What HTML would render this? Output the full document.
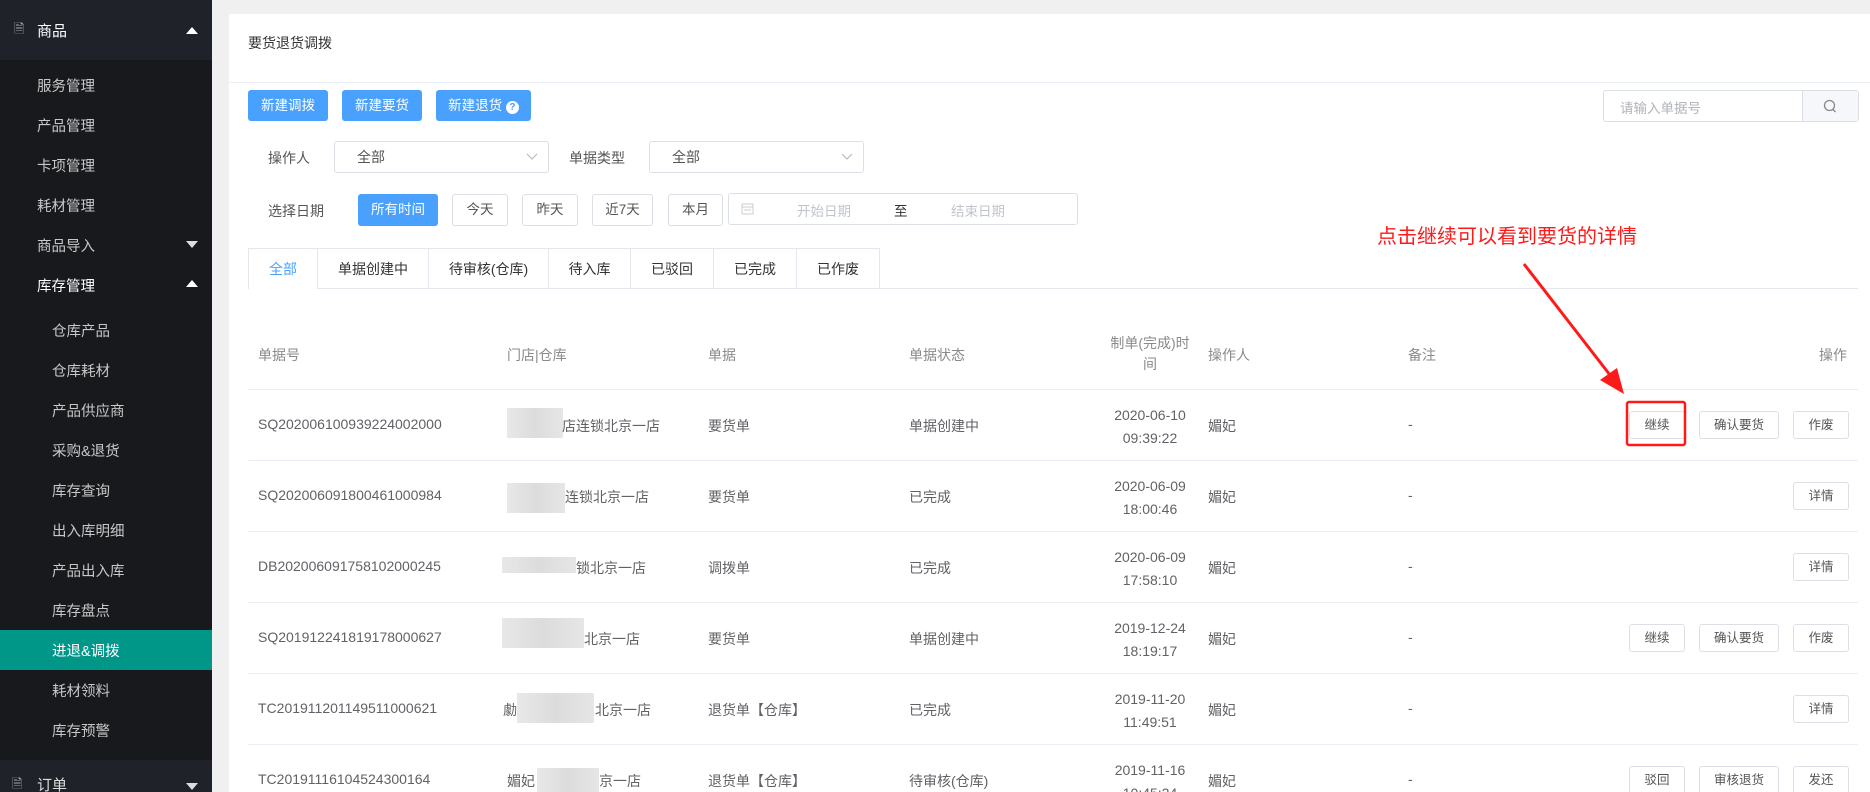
<!DOCTYPE html>
<html><head><meta charset="utf-8">
<style>
*{margin:0;padding:0;box-sizing:border-box}
html{width:1870px;height:792px;overflow:hidden}
body{width:1870px;height:792px;overflow:hidden;background:#f0f0f0;font-family:"Liberation Sans","Noto Sans CJK SC",sans-serif;font-size:14px;color:#606266;position:relative}
.a{position:absolute;white-space:nowrap}
#sb{position:absolute;left:0;top:0;width:212px;height:792px;background:#18191d}
.sh{position:absolute;left:0;width:212px;height:60px;background:#20222a;color:#fff;font-size:15px}
.si{position:absolute;left:37px;color:#c8c8c8;font-size:14.5px}
.si2{left:52px}
.tri{position:absolute;right:14px;width:0;height:0;border-left:6px solid transparent;border-right:6px solid transparent}
.up{border-bottom:7px solid #fff}
.dn{border-top:7px solid #ddd}
#card{position:absolute;left:229px;top:14px;width:1641px;height:778px;background:#fff}
.btn{position:absolute;height:31px;line-height:31px;text-align:center;background:#49a1fd;color:#fff;border-radius:3px;font-size:13.5px}
.ob{position:absolute;height:32px;line-height:30px;text-align:center;border:1px solid #dcdfe6;border-radius:3px;color:#555;font-size:13.5px;background:#fff}
.sel{position:absolute;height:32px;border:1px solid #dcdfe6;border-radius:3px;background:#fff;color:#555;line-height:30px;padding-left:22px}
.tab{position:absolute;top:248px;height:40px;line-height:40px;text-align:center;border:1px solid #e4e7ed;border-bottom:none;color:#333;font-size:14px;border-left:none}
.hd{position:absolute;color:#8a8a8a;font-size:14px}
.cell{position:absolute;color:#606266;font-size:14px}
.line{position:absolute;left:248px;width:1610px;height:1px;background:#ebeef5}
.rb{position:absolute;height:28px;line-height:26px;text-align:center;border:1px solid #dcdfe6;border-radius:3px;font-size:12.5px;color:#555;background:#fff}
.blur{position:absolute;background:linear-gradient(90deg,#e8e8e8,#dcdcdc,#e6e6e6)}
</style></head><body>
<div id="sb">
 <div class="sh" style="top:0"><span class="a" style="left:14px;top:20px;color:#aaa;font-size:13px">🗎</span><span class="a" style="left:37px;top:20px">商品</span><div class="tri up" style="top:27px"></div></div>
 <div class="si" style="top:75px">服务管理</div>
 <div class="si" style="top:115px">产品管理</div>
 <div class="si" style="top:155px">卡项管理</div>
 <div class="si" style="top:195px">耗材管理</div>
 <div class="si" style="top:235px">商品导入</div><div class="tri dn" style="top:241px"></div>
 <div class="si" style="top:275px;color:#fff">库存管理</div><div class="tri up" style="top:280px"></div>
 <div class="si si2" style="top:320px">仓库产品</div>
 <div class="si si2" style="top:360px">仓库耗材</div>
 <div class="si si2" style="top:400px">产品供应商</div>
 <div class="si si2" style="top:440px">采购&amp;退货</div>
 <div class="si si2" style="top:480px">库存查询</div>
 <div class="si si2" style="top:520px">出入库明细</div>
 <div class="si si2" style="top:560px">产品出入库</div>
 <div class="si si2" style="top:600px">库存盘点</div>
 <div style="position:absolute;left:0;top:630px;width:212px;height:40px;background:#009688"></div>
 <div class="si si2" style="top:640px;color:#fff">进退&amp;调拨</div>
 <div class="si si2" style="top:680px">耗材领料</div>
 <div class="si si2" style="top:720px">库存预警</div>
 <div class="sh" style="top:760px"><span class="a" style="left:12px;top:15px;color:#aaa;font-size:13px">🗎</span><span class="a" style="left:37px;top:14px;color:#ddd">订单</span><div class="tri dn" style="top:23px"></div></div>
</div>

<div id="card"></div>
<div class="a" style="left:248px;top:33px;color:#333;font-size:14px">要货退货调拨</div>
<div style="position:absolute;left:229px;top:82px;width:1641px;height:1px;background:#ebeef5"></div>

<div class="btn" style="left:248px;top:90px;width:80px">新建调拨</div>
<div class="btn" style="left:342px;top:90px;width:80px">新建要货</div>
<div class="btn" style="left:436px;top:90px;width:95px">新建退货 <span style="display:inline-block;width:13px;height:13px;border-radius:50%;background:#fff;color:#49a1fd;font-size:10px;line-height:13px;font-weight:bold;vertical-align:0">?</span></div>

<div style="position:absolute;left:1603px;top:90px;width:256px;height:32px;border:1px solid #dcdfe6;border-radius:3px;background:#fff"></div>
<div style="position:absolute;left:1802px;top:91px;width:56px;height:30px;background:#f5f7fa;border-left:1px solid #dcdfe6"></div>
<div class="a" style="left:1620px;top:97px;color:#b0b3b8;font-size:13.5px">请输入单据号</div>
<svg class="a" style="left:1823px;top:99px" width="14" height="15" viewBox="0 0 14 15"><circle cx="6.5" cy="6.5" r="5" fill="none" stroke="#888" stroke-width="1.3"/><line x1="10" y1="10.5" x2="12.5" y2="13" stroke="#888" stroke-width="1.3"/></svg>

<div class="a" style="left:268px;top:148px;color:#555">操作人</div>
<div class="sel" style="left:334px;top:141px;width:215px">全部</div>
<svg class="a" style="left:526px;top:152px" width="12" height="10"><polyline points="1,2 6,7 11,2" fill="none" stroke="#bbb" stroke-width="1.2"/></svg>
<div class="a" style="left:569px;top:148px;color:#555">单据类型</div>
<div class="sel" style="left:649px;top:141px;width:215px">全部</div>
<svg class="a" style="left:841px;top:152px" width="12" height="10"><polyline points="1,2 6,7 11,2" fill="none" stroke="#bbb" stroke-width="1.2"/></svg>

<div class="a" style="left:268px;top:201px;color:#555">选择日期</div>
<div class="btn" style="left:358px;top:194px;width:80px;height:32px;line-height:32px">所有时间</div>
<div class="ob" style="left:452px;top:194px;width:56px">今天</div>
<div class="ob" style="left:522px;top:194px;width:56px">昨天</div>
<div class="ob" style="left:592px;top:194px;width:61px">近7天</div>
<div class="ob" style="left:668px;top:194px;width:55px">本月</div>
<div class="ob" style="left:728px;top:193px;width:350px;height:32px"></div>
<svg class="a" style="left:741px;top:202px" width="13" height="13"><rect x="1" y="2" width="11" height="10" fill="none" stroke="#ccc"/><line x1="1" y1="5" x2="12" y2="5" stroke="#ccc"/><line x1="3" y1="8" x2="10" y2="8" stroke="#ccc"/></svg>
<div class="a" style="left:797px;top:200px;color:#c0c4cc;font-size:13.5px">开始日期</div>
<div class="a" style="left:894px;top:200px;color:#333;font-size:13.5px">至</div>
<div class="a" style="left:951px;top:200px;color:#c0c4cc;font-size:13.5px">结束日期</div>

<div style="position:absolute;left:248px;top:288px;width:1610px;height:1px;background:#e4e7ed"></div>
<div class="tab" style="left:248px;width:70px;border-left:1px solid #e4e7ed;color:#49a1fd;background:#fff;height:41px">全部</div>
<div class="tab" style="left:318px;width:111px">单据创建中</div>
<div class="tab" style="left:429px;width:120px">待审核(仓库)</div>
<div class="tab" style="left:549px;width:82px">待入库</div>
<div class="tab" style="left:631px;width:83px">已驳回</div>
<div class="tab" style="left:714px;width:83px">已完成</div>
<div class="tab" style="left:797px;width:83px">已作废</div>

<div class="a" style="left:1377px;top:220px;color:#ff1a1a;font-size:20px">点击继续可以看到要货的详情</div>

<div class="hd" style="left:258px;top:345px">单据号</div>
<div class="hd" style="left:507px;top:345px">门店|仓库</div>
<div class="hd" style="left:708px;top:345px">单据</div>
<div class="hd" style="left:909px;top:345px">单据状态</div>
<div class="hd" style="left:1105px;top:333px;width:90px;text-align:center;line-height:21px;white-space:normal">制单(完成)时<br>间</div>
<div class="hd" style="left:1208px;top:345px">操作人</div>
<div class="hd" style="left:1408px;top:345px">备注</div>
<div class="hd" style="left:1819px;top:345px">操作</div>
<div class="line" style="top:389px"></div>

<div class="cell" style="left:258px;top:416px">SQ202006100939224002000</div>
<div class="blur" style="left:507px;top:408px;width:56px;height:30px"></div>
<div class="cell" style="left:562px;top:416px">店连锁北京一店</div>
<div class="cell" style="left:708px;top:416px">要货单</div>
<div class="cell" style="left:909px;top:416px">单据创建中</div>
<div class="cell" style="left:1105px;top:404px;width:90px;text-align:center;line-height:23px">2020-06-10<br>09:39:22</div>
<div class="cell" style="left:1208px;top:416px">媚妃</div>
<div class="cell" style="left:1408px;top:416px">-</div>
<div class="rb" style="left:1629px;top:411px;width:56px">继续</div>
<div class="rb" style="left:1699px;top:411px;width:80px">确认要货</div>
<div class="rb" style="left:1793px;top:411px;width:56px">作废</div>
<div class="line" style="top:460px"></div>

<div class="cell" style="left:258px;top:487px">SQ202006091800461000984</div>
<div class="blur" style="left:507px;top:483px;width:58px;height:30px"></div>
<div class="cell" style="left:565px;top:487px">连锁北京一店</div>
<div class="cell" style="left:708px;top:487px">要货单</div>
<div class="cell" style="left:909px;top:487px">已完成</div>
<div class="cell" style="left:1105px;top:475px;width:90px;text-align:center;line-height:23px">2020-06-09<br>18:00:46</div>
<div class="cell" style="left:1208px;top:487px">媚妃</div>
<div class="cell" style="left:1408px;top:487px">-</div>
<div class="rb" style="left:1793px;top:482px;width:56px">详情</div>
<div class="line" style="top:531px"></div>

<div class="cell" style="left:258px;top:558px">DB202006091758102000245</div>
<div class="blur" style="left:502px;top:557px;width:74px;height:16px"></div>
<div class="cell" style="left:576px;top:558px">锁北京一店</div>
<div class="cell" style="left:708px;top:558px">调拨单</div>
<div class="cell" style="left:909px;top:558px">已完成</div>
<div class="cell" style="left:1105px;top:546px;width:90px;text-align:center;line-height:23px">2020-06-09<br>17:58:10</div>
<div class="cell" style="left:1208px;top:558px">媚妃</div>
<div class="cell" style="left:1408px;top:558px">-</div>
<div class="rb" style="left:1793px;top:553px;width:56px">详情</div>
<div class="line" style="top:602px"></div>

<div class="cell" style="left:258px;top:629px">SQ201912241819178000627</div>
<div class="blur" style="left:502px;top:618px;width:82px;height:30px"></div>
<div class="cell" style="left:584px;top:629px">北京一店</div>
<div class="cell" style="left:708px;top:629px">要货单</div>
<div class="cell" style="left:909px;top:629px">单据创建中</div>
<div class="cell" style="left:1105px;top:617px;width:90px;text-align:center;line-height:23px">2019-12-24<br>18:19:17</div>
<div class="cell" style="left:1208px;top:629px">媚妃</div>
<div class="cell" style="left:1408px;top:629px">-</div>
<div class="rb" style="left:1629px;top:624px;width:56px">继续</div>
<div class="rb" style="left:1699px;top:624px;width:80px">确认要货</div>
<div class="rb" style="left:1793px;top:624px;width:56px">作废</div>
<div class="line" style="top:673px"></div>

<div class="cell" style="left:258px;top:700px">TC201911201149511000621</div>
<div class="cell" style="left:503px;top:700px">勮</div>
<div class="blur" style="left:517px;top:693px;width:77px;height:30px"></div>
<div class="cell" style="left:595px;top:700px">北京一店</div>
<div class="cell" style="left:708px;top:700px">退货单【仓库】</div>
<div class="cell" style="left:909px;top:700px">已完成</div>
<div class="cell" style="left:1105px;top:688px;width:90px;text-align:center;line-height:23px">2019-11-20<br>11:49:51</div>
<div class="cell" style="left:1208px;top:700px">媚妃</div>
<div class="cell" style="left:1408px;top:700px">-</div>
<div class="rb" style="left:1793px;top:695px;width:56px">详情</div>
<div class="line" style="top:744px"></div>

<div class="cell" style="left:258px;top:771px">TC20191116104524300164</div>
<div class="cell" style="left:507px;top:771px">媚妃</div>
<div class="blur" style="left:537px;top:768px;width:62px;height:24px"></div>
<div class="cell" style="left:599px;top:771px">京一店</div>
<div class="cell" style="left:708px;top:771px">退货单【仓库】</div>
<div class="cell" style="left:909px;top:771px">待审核(仓库)</div>
<div class="cell" style="left:1105px;top:759px;width:90px;text-align:center;line-height:23px">2019-11-16<br>10:45:24</div>
<div class="cell" style="left:1208px;top:771px">媚妃</div>
<div class="cell" style="left:1408px;top:771px">-</div>
<div class="rb" style="left:1629px;top:766px;width:56px">驳回</div>
<div class="rb" style="left:1699px;top:766px;width:80px">审核退货</div>
<div class="rb" style="left:1793px;top:766px;width:56px">发还</div>

<svg class="a" style="left:0;top:0" width="1870" height="792">
 <rect x="1627" y="402" width="58" height="43" fill="none" stroke="#ff1a1a" stroke-width="2.5" rx="2"/>
 <line x1="1524" y1="264" x2="1610" y2="375" stroke="#ff1a1a" stroke-width="3"/>
 <polygon points="1624,394 1600,380 1617,368" fill="#ff1a1a"/>
</svg>
</body></html>
